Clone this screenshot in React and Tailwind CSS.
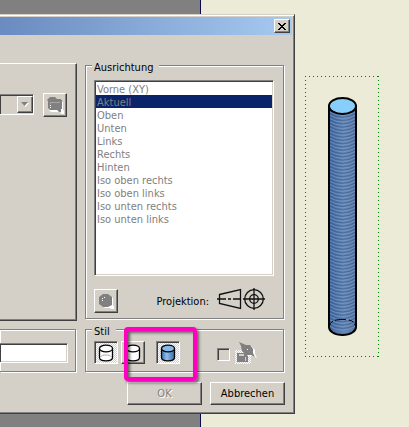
import { clsx } from 'clsx';

const views = [
  'Vorne (XY)',
  'Aktuell',
  'Oben',
  'Unten',
  'Links',
  'Rechts',
  'Hinten',
  'Iso oben rechts',
  'Iso oben links',
  'Iso unten rechts',
  'Iso unten links',
];

// one y position per turn of the thread
const turns = Array.from({ length: 66 }, (_, i) => 34 + i * 3.3);

const raised =
  'bg-[#d4d0c8] border border-t-white border-l-white border-r-[#404040] border-b-[#404040] shadow-[inset_-1px_-1px_0_#808080]';
const sunken =
  'border border-t-[#808080] border-l-[#808080] border-r-white border-b-white shadow-[inset_1px_1px_0_#404040,inset_-1px_-1px_0_#d4d0c8]';
const pressed =
  'border border-t-[#808080] border-l-[#808080] border-r-white border-b-white shadow-[inset_1px_1px_0_#404040] bg-[repeating-conic-gradient(#fff_0_25%,#d4d0c8_0_50%)] bg-[length:2px_2px]';

const Group = ({ title, className, children }) => (
  <fieldset
    className={clsx(
      'relative min-w-0 border border-[#808080] shadow-[1px_1px_0_#fff,inset_1px_1px_0_#fff]',
      className
    )}
  >
    {title && (
      <legend className="absolute left-1.5 -top-[5px] bg-[#d4d0c8] pl-0.5 pr-1.5 leading-[13px]">{title}</legend>
    )}
    {children}
  </fieldset>
);

const IconButton = ({ label, down, disabled, className, children }) => (
  <button
    type="button"
    aria-label={label}
    aria-pressed={down}
    disabled={disabled}
    className={clsx('flex w-6 shrink-0 items-center justify-center', down ? pressed : raised, className)}
  >
    {children}
  </button>
);

const FolderIcon = () => (
  <svg width="18" height="18" viewBox="0 0 18 18">
    <path d="M3 3l1-1h5l2 2h4v1h1v8l1 1v3h-2l-2-2H4l-2-2V6l1-1z" fill="#fff" transform="translate(1 1)" />
    <path d="M3 2l1-1h5l2 2h4v1h1v9h-1v3h-2l-2-2H4l-2-2V5l-1-1z" fill="#808080" />
    <path d="M4 6h10v1H5v1H4z" fill="#a8a59f" />
    <path d="M4 9h1v1H4zM4 11h1v1H4z" fill="#fff" />
  </svg>
);

const ViewIcon = () => (
  <svg width="16" height="16" viewBox="0 0 16 16">
    <path d="M5 1h5l4 3v7l1 2v2h-3l-1-1H6l-4-3V4z" fill="#fff" transform="translate(1 1)" />
    <path d="M5 1h5l4 3v8l-4 2H5l-4-3V4z" fill="#808080" />
    <path d="M4 5h1v1H4zM6 4h1v1H6zM4 7h1v1H4z" fill="#fff" />
  </svg>
);

const CylinderIcon = ({ id, fill, hidden }) => (
  <svg width="16" height="18" viewBox="0 0 16 18">
    <defs>
      <linearGradient id={id}>
        <stop offset="0" stopColor={fill ? '#3d6ba8' : '#fff'} />
        <stop offset="0.4" stopColor={fill ? '#8fc0ee' : '#fff'} />
        <stop offset="1" stopColor={fill ? '#3a68a4' : '#fff'} />
      </linearGradient>
    </defs>
    <path
      d="M1.500 4.500v9c0 1.800 2.500 3.300 6.500 3.300s6.500-1.500 6.500-3.300v-9"
      fill={`url(#${id})`}
      stroke="#000"
      strokeWidth="1.300"
    />
    <ellipse cx="8" cy="4.500" rx="6.500" ry="3.300" fill={fill || '#fff'} stroke="#000" strokeWidth="1.300" />
    {hidden && <path d="M2.500 13c1-1.700 3-2 5.500-2s4.500.3 5.500 2" fill="none" stroke="#aaa" />}
  </svg>
);

const ProjectionIcon = () => (
  <svg width="48" height="24" viewBox="0 0 48 24" fill="none" stroke="#111" strokeWidth="1.300">
    <path d="M2.500 7.500L23.500 2.500v19l-21-5z" />
    <path d="M0 12h9m2 0h3m2 0h8m2 0h22M37 1v22" />
    <circle cx="37" cy="12" r="9.300" />
    <circle cx="37" cy="12" r="4.300" />
  </svg>
);

const RasterIcon = () => (
  <svg width="22" height="24" viewBox="0 0 22 24">
    <defs>
      <pattern id="dots" width="2" height="2" patternUnits="userSpaceOnUse">
        <path d="M0 0h1v1H0zM1 1h1v1H1z" fill="#fff" />
      </pattern>
    </defs>
    <path d="M0 9h16v14H0z" fill="url(#dots)" />
    <path d="M2 12h11v9H2z" fill="#808080" />
    <path d="M4 13h5v2H4zM10 16h1v4h-1z" fill="#d4d0c8" />
    <path d="M4 1l7 3h4l4 4v4l2 4-4-2h-5l-5-4-1-5z" fill="#fff" transform="translate(1 1)" />
    <path d="M4 1l7 3h4l3 4v4l2 4-4-2h-5L7 10 6 5z" fill="#808080" />
    <path d="M12 8h1v1h-1z" fill="#fff" />
  </svg>
);

const Preview = () => (
  <svg width="75" height="281" viewBox="0 0 75 281" role="img" aria-label="Modell">
    <defs>
      <linearGradient id="tube">
        <stop offset="0" stopColor="#40659d" />
        <stop offset="0.550" stopColor="#6688b6" />
        <stop offset="1" stopColor="#58779f" />
      </linearGradient>
      <clipPath id="body">
        <path d="M24 30v221c0 4 5 8 13.500 8s13.500-4 13.500-8V30z" />
      </clipPath>
    </defs>
    <path
      d="M.5 0v281M73.500 0v281M0 .5h74M0 280.500h74"
      stroke="#008000"
      strokeDasharray="1 3"
      shapeRendering="crispEdges"
    />
    <path d="M24 30v221c0 4 5 8 13.500 8s13.500-4 13.500-8V30z" fill="url(#tube)" />
    <g clipPath="url(#body)" fill="none" strokeOpacity="0.500">
      {turns.map((y) => (
        <g key={y}>
          <path d={`M24 ${y}Q37.500 ${y + 8} 51 ${y}`} stroke="#2f548d" />
          <path d={`M24 ${y + 1.5}Q37.500 ${y + 9.5} 51 ${y + 1.5}`} stroke="#86a5cd" />
        </g>
      ))}
    </g>
    <path d="M24 30v221c0 4 5 8 13.500 8s13.500-4 13.500-8V30z" fill="none" stroke="#000" strokeWidth="2" />
    <ellipse cx="37.500" cy="30" rx="13.500" ry="8" fill="#87cefa" stroke="#000" strokeWidth="2" />
    <path d="M25 249c1-4 5-5.500 12.500-5.500S49 245 50 249" fill="none" stroke="#000" strokeDasharray="5 2 11 3" />
  </svg>
);

const StyleGroup = () => (
  <Group title="Stil" className="mr-px mb-px flex items-center pt-[11px] pb-[7px] pl-2">
    <IconButton label="Verdeckte Kanten" down className="h-[23px]">
      <CylinderIcon id="wire" hidden />
    </IconButton>
    <IconButton label="Ohne verdeckte Kanten" className="ml-[3px] h-[23px]">
      <CylinderIcon id="plain" />
    </IconButton>
    <IconButton label="Schattiert" down className="ml-[11px] h-[23px]">
      <CylinderIcon id="shaded" fill="#87b9ea" />
    </IconButton>
    <label className="ml-auto mr-[26px] flex h-[23px] items-center gap-[5px]">
      <input
        type="checkbox"
        disabled
        aria-label="Rasteransicht"
        className={clsx('mt-1 size-[13px] appearance-none bg-[#d4d0c8]', sunken)}
      />
      <RasterIcon />
    </label>
    {/* highlight frame */}
    <div className="pointer-events-none absolute -top-[3px] left-[38px] h-[54px] w-[73px] rounded-[4px] border-4 border-[#ff00c0] shadow-[2px_2px_3px_#0008,inset_2px_2px_3px_#0008]" />
  </Group>
);

const Dialog = () => (
  <form
    role="dialog"
    className="min-w-0 flex-1 border-t border-r border-b border-t-[#d4d0c8] border-r-[#404040] border-b-[#404040] bg-[#d4d0c8] pt-0.5 pr-0.5 pb-2 shadow-[inset_0_1px_0_#fff,inset_-1px_-1px_0_#808080]"
  >
    <header className="flex h-[18px] items-center justify-end bg-linear-to-r from-[#6a8bc0] to-[#a6caf0] pr-0.5">
      <button
        type="button"
        aria-label="Schließen"
        className={clsx('flex h-3.5 w-4 items-center justify-center', raised)}
      >
        <svg width="8" height="7" viewBox="0 0 8 7" shapeRendering="crispEdges">
          <path
            d="M0 0h2v1h1v1h2V1h1V0h2v1H7v1H6v1H5v1h1v1h1v1h1v1H6V6H5V5H3v1H2v1H0V6h1V5h1V4h1V3H2V2H1V1H0z"
            fill="#000"
          />
        </svg>
      </button>
    </header>

    <div className="grid grid-cols-[77fr_200fr] gap-2 pt-7 pr-[7px]">
      <section className="flex items-start gap-[9px] border-t border-r border-b border-t-white border-r-[#404040] border-b-[#404040] pt-[29px] pr-[9px] shadow-[inset_-1px_-1px_0_#808080]">
        <div className="relative mt-px min-w-0 flex-1">
          <select
            disabled
            aria-label="Datei"
            className={clsx('block h-[21px] w-full appearance-none border-l-0 bg-[#d4d0c8] opacity-100', sunken)}
          />
          <span
            className={clsx(
              'pointer-events-none absolute top-0.5 right-px flex h-[17px] w-4 items-center justify-center',
              raised
            )}
          >
            <svg width="8" height="5" viewBox="0 0 8 5">
              <path d="M1 1h7L4.500 5z" fill="#fff" />
              <path d="M0 0h7L3.500 4z" fill="#808080" />
            </svg>
          </span>
        </div>
        <IconButton label="Durchsuchen" disabled className="h-6">
          <FolderIcon />
        </IconButton>
      </section>

      <Group title="Ausrichtung" className="mt-0.5 mr-px mb-0.5 pt-3.5 pr-[9px] pb-[5px] pl-2">
        <select
          size={11}
          disabled
          defaultValue="Aktuell"
          aria-label="Ausrichtung"
          className={clsx(
            'block h-[196px] w-full appearance-none overflow-hidden rounded-none bg-white p-px opacity-100 [-webkit-text-fill-color:#808080]',
            sunken
          )}
        >
          {views.map((v) => (
            <option
              key={v}
              className="block h-[13px] min-h-0 px-px pt-px pb-0 leading-[13px] checked:bg-[linear-gradient(#0a246a,#0a246a)]"
            >
              {v}
            </option>
          ))}
        </select>
        <div className="mt-[13px] flex items-center">
          <IconButton label="Ansicht ändern" disabled className="h-6">
            <ViewIcon />
          </IconButton>
          <span className="mr-2 ml-auto leading-[13px]">Projektion:</span>
          <span className="mr-[9px] -mt-1">
            <ProjectionIcon />
          </span>
        </div>
      </Group>

      <Group className="mr-px mb-px border-l-0 pt-[13px] pr-[7px]">
        <input
          type="text"
          aria-label="Bezeichnung"
          className={clsx('block h-5 w-full border-l-0 bg-white px-1', sunken)}
        />
      </Group>
      <StyleGroup />
    </div>

    <footer className="mt-[9px] flex justify-end gap-2 pr-[7px]">
      <button
        type="submit"
        disabled
        className={clsx('h-[23px] w-[75px] pt-px text-[#808080] [text-shadow:1px_1px_0_#fff]', raised)}
      >
        OK
      </button>
      <button type="button" className={clsx('h-[23px] w-[75px] pt-px', raised)}>
        Abbrechen
      </button>
    </footer>
  </form>
);

export default function App() {
  return (
    <main className="relative min-h-screen bg-[#ecebd7] font-['DejaVu_Sans_Condensed','DejaVu_Sans',sans-serif] text-[11px] text-black">
      <div className="absolute inset-0 flex">
        <div className="flex-1 border-r border-[#0a0a50] bg-[#808080]" />
        <div className="w-[208px]" />
      </div>
      <div className="relative flex items-start pt-3.5">
        <Dialog />
        <div className="flex w-[114px] shrink-0 pt-[62px] pl-2.5">
          <Preview />
        </div>
      </div>
    </main>
  );
}
